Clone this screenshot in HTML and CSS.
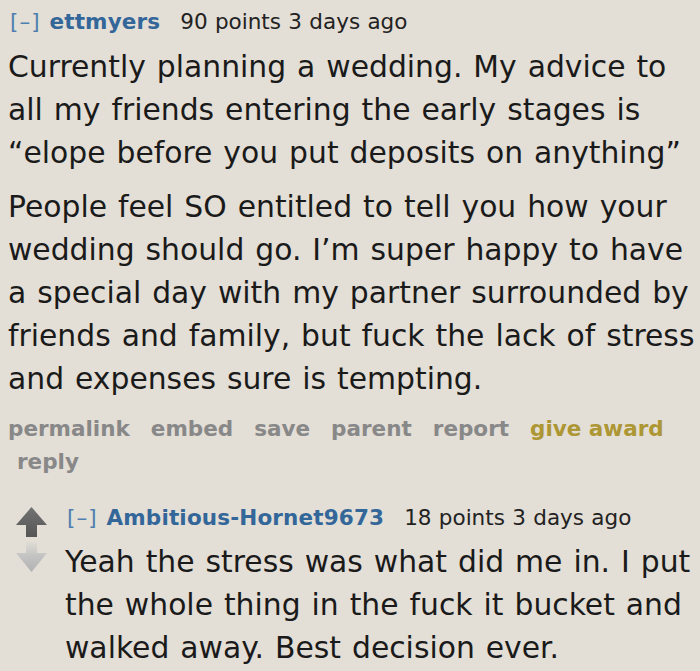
FILE: index.html
```html
<!DOCTYPE html>
<html lang="en">
<head>
<meta charset="utf-8">
<title>Comment thread</title>
<link rel="stylesheet" href="styles.css">
</head>
<body>
<div class="comment">
  <div class="entry">
    <p class="tagline"><a class="expand">[–]</a><a class="author">ettmyers</a><span class="score">90 points 3 days ago</span></p>
    <div class="md">
      <p>Currently planning a wedding. My advice to all my friends entering the early stages is “elope before you put deposits on anything”</p>
      <p>People feel SO entitled to tell you how your wedding should go. I’m super happy to have a special day with my partner surrounded by friends and family, but fuck the lack of stress and expenses sure is tempting.</p>
    </div>
    <ul class="buttons">
      <li><a>permalink</a></li>
      <li><a>embed</a></li>
      <li><a>save</a></li>
      <li><a>parent</a></li>
      <li><a>report</a></li>
      <li><a class="gold">give award</a></li>
      <li class="reply"><a>reply</a></li>
    </ul>
  </div>
  <div class="child">
    <div class="midcol">
      <svg class="arrows" width="32" height="68" viewBox="0 0 32 68" aria-hidden="true">
        <defs>
          <linearGradient id="up" x1="0" y1="0" x2="0" y2="1">
            <stop offset="0" stop-color="#727272"/>
            <stop offset="1" stop-color="#565656"/>
          </linearGradient>
          <linearGradient id="down" x1="0" y1="0" x2="0" y2="1">
            <stop offset="0" stop-color="#e0dcd5"/>
            <stop offset="0.45" stop-color="#c4c4c4"/>
            <stop offset="1" stop-color="#b2b2b2"/>
          </linearGradient>
        </defs>
        <path d="M16.5 2 L32 20 L22 20 L22 32 L11 32 L11 20 L1 20 Z" fill="url(#up)"/>
        <path d="M11 37 L22 37 L22 48 L32 48 L16.5 67 L1 48 L11 48 Z" fill="url(#down)"/>
      </svg>
    </div>
    <div class="entry">
      <p class="tagline"><a class="expand">[–]</a><a class="author">Ambitious-Hornet9673</a><span class="score">18 points 3 days ago</span></p>
      <div class="md">
        <p>Yeah the stress was what did me in. I put the whole thing in the fuck it bucket and walked away. Best decision ever.</p>
      </div>
    </div>
  </div>
</div>
</body>
</html>
```
FILE: styles.css
```css
html {
  overflow: hidden;
}
html, body {
  margin: 0;
  padding: 0;
}
body {
  background: #e3ded6;
  font-family: "DejaVu Sans", Verdana, sans-serif;
  color: #1a1a1a;
  width: 700px;
  height: 671px;
  overflow: hidden;
}
.comment {
  padding-left: 8px;
}
.tagline {
  margin: 0;
  padding-top: 7px;
  font-size: 21.5px;
  line-height: 30px;
  white-space: nowrap;
  word-spacing: 0.5px;
}
.expand {
  color: #4f7eb0;
  letter-spacing: 1px;
  margin-left: 2px;
  margin-right: 9px;
}
.author {
  color: #336699;
  font-weight: bold;
  letter-spacing: 0.15px;
  margin-right: 20px;
}
.score {
  color: #222;
}
.md {
  margin-top: 8px;
  font-size: 29.8px;
  line-height: 43px;
  word-spacing: 1.5px;
}
.md p {
  margin: 0 0 11px;
}
.md p:last-child {
  margin-bottom: 0;
}
.buttons {
  list-style: none;
  margin: 12px 0 0;
  padding: 0;
  display: flex;
  flex-wrap: wrap;
  column-gap: 21px;
  font-size: 21.5px;
  line-height: 33px;
  font-weight: bold;
  color: #888;
}
.buttons .gold {
  color: #ad9634;
}
.buttons .reply {
  margin-left: 9px;
}
.child {
  display: flex;
  margin-top: 25px;
  padding-left: 7px;
}
.child .tagline {
  padding-top: 0;
}
.child .md {
  margin-top: 7px;
}
.midcol {
  flex: none;
  width: 32px;
  margin-top: 2px;
  margin-right: 18px;
}
.arrows {
  display: block;
}
.child .entry {
  flex: 1;
  min-width: 0;
}
```
